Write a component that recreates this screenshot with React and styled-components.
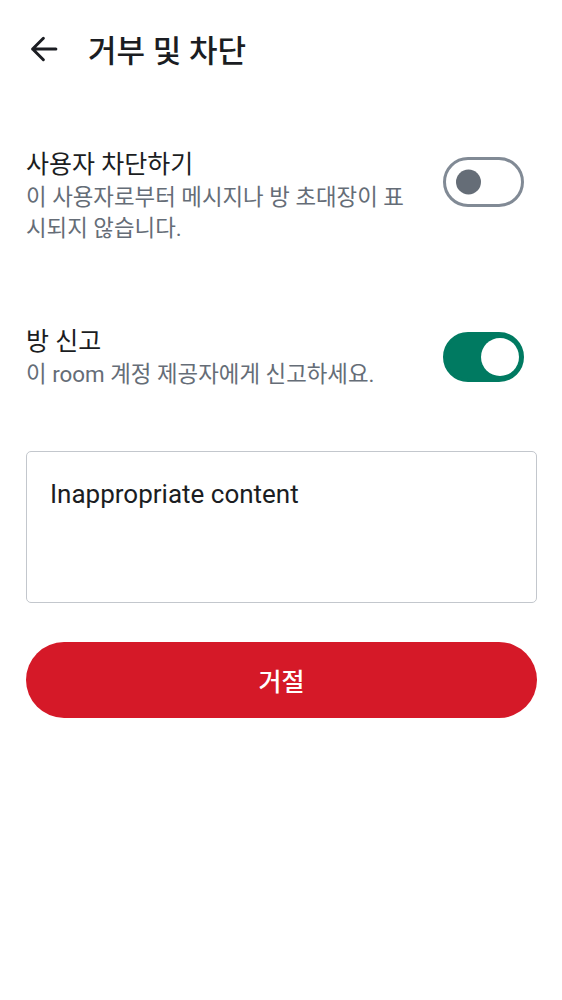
import { useState } from "react";
import styled, { createGlobalStyle } from "styled-components";

const GlobalStyle = createGlobalStyle`
  body {
    margin: 0;
    background: #ffffff;
    font-family: Roboto, "Noto Sans CJK KR", sans-serif;
    color: #1b1d22;
  }
`;

const Page = styled.div`
  width: 562px;
  min-height: 1000px;
  background: #ffffff;
`;

const Header = styled.header`
  display: flex;
  align-items: center;
  height: 104px;
  padding-left: 25px;
`;

const BackButton = styled.button`
  display: flex;
  align-items: center;
  justify-content: center;
  width: 38px;
  height: 38px;
  padding: 0;
  margin: -6px 25px 0 0;
  border: none;
  background: transparent;
  color: #1b1d22;
  cursor: pointer;
`;

const Title = styled.h1`
  margin: 0;
  font-size: 31px;
  font-weight: 500;
  line-height: 38px;
  color: #1b1d22;
`;

const Content = styled.main`
  display: flex;
  flex-direction: column;
  padding: 0 25px 0 26px;
`;

const Row = styled.div`
  display: flex;
  align-items: flex-start;
  justify-content: space-between;
  gap: 24px;
  margin-top: ${(p) => p.$top}px;
`;

const Texts = styled.div`
  display: flex;
  flex-direction: column;
  flex: 1;
  max-width: 390px;
`;

const RowTitle = styled.div`
  font-size: 25px;
  line-height: 34px;
  color: #1b1d22;
`;

const RowDesc = styled.div`
  font-size: 22.4px;
  line-height: 31px;
  color: #656d77;
`;

const Track = styled.button`
  position: relative;
  flex: none;
  width: 81px;
  height: 50px;
  margin: ${(p) => p.$offset}px 13px 0 0;
  padding: 0;
  box-sizing: border-box;
  border-radius: 25px;
  border: 3px solid ${(p) => (p.$on ? "#007a61" : "#818a95")};
  background: ${(p) => (p.$on ? "#007a61" : "#ffffff")};
  cursor: pointer;
`;

const Thumb = styled.span`
  position: absolute;
  top: 50%;
  left: ${(p) => (p.$on ? "34.5px" : "9.5px")};
  width: ${(p) => (p.$on ? "38px" : "25px")};
  height: ${(p) => (p.$on ? "38px" : "25px")};
  border-radius: 50%;
  transform: translateY(-50%);
  background: ${(p) => (p.$on ? "#ffffff" : "#656d77")};
`;

const ReasonBox = styled.textarea`
  display: block;
  width: 100%;
  height: 152px;
  margin-top: 61px;
  padding: 27px 23px;
  box-sizing: border-box;
  border: 1.5px solid #c3c7cd;
  border-radius: 5px;
  resize: none;
  outline: none;
  font-family: Roboto, "Noto Sans CJK KR", sans-serif;
  font-size: 26px;
  line-height: 30px;
  color: #1b1d22;
`;

const DeclineButton = styled.button`
  display: flex;
  align-items: center;
  justify-content: center;
  width: 100%;
  height: 76px;
  margin-top: 39px;
  border: none;
  border-radius: 38px;
  background: #d51928;
  color: #ffffff;
  font-family: Roboto, "Noto Sans CJK KR", sans-serif;
  font-size: 25px;
  font-weight: 500;
  cursor: pointer;
`;

const Switch = ({ on, offset, onToggle }) => (
  <Track $on={on} $offset={offset} onClick={onToggle} role="switch" aria-checked={on}>
    <Thumb $on={on} />
  </Track>
);

const BackArrow = () => (
  <svg width="38" height="38" viewBox="0 0 24 24" fill="none">
    <path
      d="M19.5 12H4.8M11.6 5.2 4.8 12l6.8 6.8"
      stroke="currentColor"
      strokeWidth="1.9"
      strokeLinecap="round"
      strokeLinejoin="round"
    />
  </svg>
);

export default function App() {
  const [block, setBlock] = useState(false);
  const [report, setReport] = useState(true);
  const [reason, setReason] = useState("Inappropriate content");

  return (
    <Page>
      <GlobalStyle />
      <Header>
        <BackButton aria-label="뒤로">
          <BackArrow />
        </BackButton>
        <Title>거부 및 차단</Title>
      </Header>
      <Content>
        <Row $top={44}>
          <Texts>
            <RowTitle>사용자 차단하기</RowTitle>
            <RowDesc>이 사용자로부터 메시지나 방 초대장이 표시되지 않습니다.</RowDesc>
          </Texts>
          <Switch on={block} offset={9} onToggle={() => setBlock(!block)} />
        </Row>
        <Row $top={81}>
          <Texts>
            <RowTitle>방 신고</RowTitle>
            <RowDesc>이 room 계정 제공자에게 신고하세요.</RowDesc>
          </Texts>
          <Switch on={report} offset={7} onToggle={() => setReport(!report)} />
        </Row>
        <ReasonBox value={reason} onChange={(e) => setReason(e.target.value)} />
        <DeclineButton>거절</DeclineButton>
      </Content>
    </Page>
  );
}
